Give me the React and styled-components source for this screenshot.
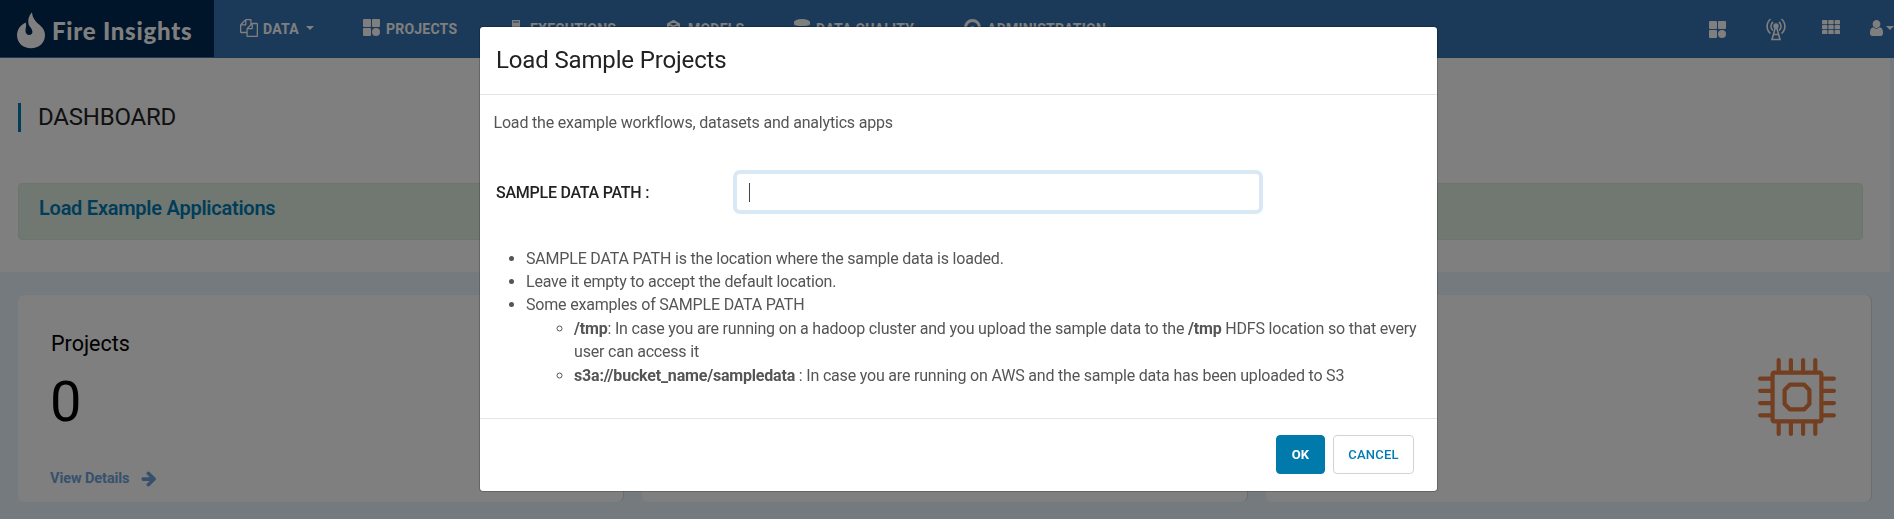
import React from "react";
import styled, { createGlobalStyle } from "styled-components";

const Global = createGlobalStyle`
  * { box-sizing: border-box; }
  html, body { margin: 0; height: 519px; overflow: hidden; background: #ebf5fd; }
  body { font-family: Roboto, "Liberation Sans", sans-serif; font-size: 16px; color: #555; }
  svg { display: block; flex: none; }
`;

const Page = styled.div`
  height: 519px;
  overflow: hidden;
`;

const NavBar = styled.header`
  display: flex;
  height: 58px;
  background: #3674b4;
  border-bottom: 1px solid #3472ae;
`;

const Brand = styled.div`
  display: flex;
  align-items: center;
  width: 214px;
  flex: none;
  padding: 4px 0 0 17px;
  gap: 7px;
  background: #002a54;
  color: #fff;
`;

const BrandName = styled.span`
  font-family: Lato, sans-serif;
  font-weight: 900;
  font-size: 24px;
  line-height: 30px;
  letter-spacing: 0.75px;
  white-space: nowrap;
`;

const Menu = styled.nav`
  display: flex;
  flex: 1;
  height: 57px;
`;

const MenuItem = styled.a`
  display: flex;
  align-items: center;
  flex: none;
  width: ${(p) => p.$width}px;
  padding: 0 0 2px 26px;
  color: #fff;
  font-size: 14px;
  font-weight: 700;
  letter-spacing: 0.22px;
  white-space: nowrap;
`;

const MenuIcon = styled.span`
  display: flex;
  justify-content: center;
  width: 17px;
  margin-right: 6px;
`;

const MenuText = styled.span`
  padding-top: 3px;
  line-height: 18px;
`;

const Caret = styled.span`
  width: 0;
  height: 0;
  border: 4.5px solid transparent;
  border-top: 4px solid #fff;
  border-bottom: 0;
  margin-left: ${(p) => p.$gap}px;
  flex: none;
`;

const Tools = styled.div`
  display: flex;
  width: 185px;
  flex: none;
  height: 57px;
  color: #fff;
`;

const Tool = styled.a`
  display: flex;
  flex: none;
  align-items: flex-start;
  width: ${(p) => p.$width}px;
  padding-top: ${(p) => p.$top}px;
`;

const ToolCaret = styled(Caret)`
  margin-top: 6px;
`;

const Intro = styled.section`
  width: 1890px;
  height: 214px;
  padding: 45px 0 0 18px;
  background: #fff;
`;

const Heading = styled.h1`
  margin: 0 0 51px;
  height: 29px;
  padding-left: 17px;
  border-left: 3px solid #007bb5;
  color: #222;
  font-size: 24px;
  font-weight: 400;
  line-height: 28px;
  letter-spacing: -0.2px;
`;

const Banner = styled.div`
  width: 1845px;
  height: 57px;
  padding: 11px 20px;
  border: 1px solid #d9ead9;
  border-radius: 4px;
  background: #e2f0e2;
  color: #007bb5;
  font-size: 20px;
  font-weight: 600;
  line-height: 26px;
  letter-spacing: -0.25px;
`;

const Cards = styled.section`
  display: grid;
  grid-template-columns: repeat(3, 605px);
  gap: 19px;
  padding: 23px 0 0 18px;
`;

const Card = styled.article`
  display: flex;
  justify-content: space-between;
  height: 207px;
  padding: 35px 35px 0 32px;
  border-radius: 6px;
  background: #fff;
  box-shadow: 1px 0 1px rgba(0, 0, 0, 0.12);
`;

const CardTitle = styled.h2`
  margin: 0 0 0 1px;
  color: #000;
  font-size: 21.5px;
  font-weight: 400;
  line-height: 28px;
`;

const Count = styled.div`
  margin: 14px 0 0;
  color: #000;
  font-size: 56px;
  line-height: 60px;
`;

const Details = styled.a`
  display: flex;
  align-items: center;
  gap: 12px;
  margin-top: 37px;
  color: #6ea2da;
  font-size: 14.5px;
  font-weight: 700;
  line-height: 20px;
  letter-spacing: -0.08px;
`;

const ChipHolder = styled.div`
  padding-top: 28px;
`;

const Overlay = styled.div`
  position: fixed;
  inset: 0;
  background: rgba(0, 0, 0, 0.5);
`;

const Dialog = styled.div`
  width: 959px;
  height: 466px;
  margin: 26px 0 0 479px;
  border: 1px solid rgba(0, 0, 0, 0.2);
  border-radius: 4px;
  background: #fff;
  background-clip: padding-box;
`;

const DialogHeader = styled.div`
  height: 68px;
  padding: 17px 16px;
  border-bottom: 1px solid #e5e5e5;
`;

const DialogTitle = styled.h3`
  margin: 0;
  color: #222;
  font-size: 24px;
  font-weight: 400;
  line-height: 32px;
  letter-spacing: -0.15px;
`;

const DialogBody = styled.div`
  height: 323px;
  padding: 16px 14px 0 14px;
  letter-spacing: -0.19px;
`;

const Lead = styled.p`
  margin: 0 0 36px -0.5px;
  line-height: 23px;
`;

const Field = styled.div`
  display: flex;
  align-items: center;
  height: 44px;
`;

const Label = styled.label`
  width: 243px;
  padding-left: 2px;
  color: #222;
  font-weight: 500;
  letter-spacing: -0.25px;
`;

const Input = styled.div`
  display: flex;
  align-items: center;
  width: 522px;
  height: 36px;
  padding-left: 12px;
  border-radius: 3px;
  background: #fff;
  box-shadow: 0 0 0 4px #d9e8f5;
`;

const TextCursor = styled.span`
  width: 1px;
  height: 19px;
  background: #444;
`;

const List = styled.ul`
  margin: ${(p) => p.$top}px 0 0;
  padding-left: ${(p) => p.$indent}px;
  list-style: ${(p) => p.$marker};
  line-height: ${(p) => p.$line}px;
`;

const DialogFooter = styled.div`
  display: flex;
  justify-content: flex-end;
  gap: 8px;
  height: 73px;
  padding: 16px 23px 0;
  border-top: 1px solid #e5e5e5;
`;

const Button = styled.button`
  width: ${(p) => (p.$primary ? 49 : 81)}px;
  height: 39px;
  padding: 0;
  border: 1px solid ${(p) => (p.$primary ? "#007aab" : "#ced4da")};
  border-radius: 4px;
  background: ${(p) => (p.$primary ? "#007aab" : "#fff")};
  color: ${(p) => (p.$primary ? "#fff" : "#007bb5")};
  font-family: inherit;
  font-size: 13px;
  font-weight: ${(p) => (p.$primary ? 700 : 500)};
  letter-spacing: 0.2px;
`;

const Flame = () => (
  <svg width="28" height="37" viewBox="0 0 28 37" fill="currentColor">
    <path d="M15 .3C12 3.500 10.800 7.500 11.400 11.200c.5 3.200 3.700 5 4 8.300.2 2.200-1.200 3.500-3.200 3.500-2.400 0-3.700-1.700-3.700-4.200 0-2.800 1.200-4.600.3-8.300C3.600 12.800 0 17.500 0 23.300 0 31 6.200 36.300 14 36.300s14-5.300 14-13c0-4.300-2-7.400-5.300-10.200C18.600 9.700 15.400 6 15 .3z" />
  </svg>
);

const Copy = () => (
  <svg width="18" height="18" viewBox="0 0 1792 1792" fill="currentColor">
    <path d="M1696 384q40 0 68 28t28 68v1216q0 40-28 68t-68 28h-960q-40 0-68-28t-28-68v-288h-544q-40 0-68-28t-28-68v-672q0-40 20-88t48-76l408-408q28-28 76-48t88-20h416q40 0 68 28t28 68v328q68-40 128-40h416zm-544 213l-299 299h299v-299zm-640-384l-299 299h299v-299zm196 647l316-316v-416h-384v416q0 40-28 68t-68 28h-416v640h512v-256q0-40 20-88t48-76zm956 804v-1152h-384v416q0 40-28 68t-68 28h-416v640h896z" />
  </svg>
);

const Tiles = () => (
  <svg width="17" height="18" viewBox="0 0 17 18" fill="currentColor">
    <rect width="8" height="8" rx="1" />
    <rect x="9" width="8" height="8" rx="1" />
    <rect y="9" width="8" height="8" rx="1" />
    <circle cx="13" cy="13" r="4" />
  </svg>
);

const Battery = () => (
  <svg width="8" height="16" viewBox="0 0 8 16" fill="currentColor">
    <path d="M0 0h8v1.400H0zM0 1h1v2H0zM7 1h1v2H7zM0 2.600h8V16H0z" />
  </svg>
);

const Cube = () => (
  <svg width="13" height="16" viewBox="0 0 13 16" fill="none" stroke="currentColor" strokeWidth="2">
    <path d="M1 4.200 6.500 1 12 4.200v7.600L6.500 15 1 11.800zM1 4.200l5.500 2.500L12 4.200M6.500 7v8" />
  </svg>
);

const Database = () => (
  <svg width="16" height="17" viewBox="0 0 16 17" fill="currentColor">
    <ellipse cx="8" cy="3" rx="8" ry="3" />
    <path d="M0 3h16v2.500c-3 2-13 2-16 0zM0 7.500c3 2 13 2 16 0v3c-3 2-13 2-16 0zM0 12.500c3 2 13 2 16 0V15c-3 2-13 2-16 0z" />
  </svg>
);

const AdminBadge = () => (
  <svg width="17" height="17" viewBox="0 0 17 17">
    <circle cx="8.500" cy="8.500" r="7" fill="none" stroke="currentColor" strokeWidth="3" />
    <circle cx="8.500" cy="9.500" r="2.500" fill="currentColor" />
  </svg>
);

const Tower = () => (
  <svg width="22" height="23" viewBox="0 0 22 23" fill="none" stroke="currentColor" strokeWidth="1.600">
    <path d="M5.500 1a9.500 9.500 0 0 0 0 14.500M16.500 1a9.500 9.500 0 0 1 0 14.500M8 4a5.200 5.200 0 0 0 0 8.300M14 4a5.200 5.200 0 0 1 0 8.300" />
    <circle cx="11" cy="8" r="2.700" fill="currentColor" stroke="none" />
    <path d="M10.500 9 7 21.500h8L11.500 9zM9 16.500h4" />
  </svg>
);

const GridDots = () => (
  <svg width="18" height="14" viewBox="0 0 18 14" fill="currentColor">
    {[0, 5, 10].map((y) =>
      [0, 6.3, 12.6].map((x) => <rect key={`${x}-${y}`} x={x} y={y} width="5.400" height="4.200" rx=".8" />)
    )}
  </svg>
);

const User = () => (
  <svg width="13" height="16" viewBox="256 128 1280 1536" preserveAspectRatio="none" fill="currentColor">
    <path d="M1536 1399q0 109-62.500 187t-150.500 78h-854q-88 0-150.500-78t-62.500-187q0-85 8.500-160.500t31.500-152 58.500-131 94-89 134.500-34.500q131 128 313 128t313-128q76 0 134.500 34.500t94 89 58.500 131 31.500 152 8.500 160.500zm-256-887q0 159-112.500 271.500t-271.500 112.500-271.500-112.500-112.500-271.500 112.500-271.500 271.500-112.500 271.500 112.500 112.500 271.500z" />
  </svg>
);

const ArrowRight = () => (
  <svg width="15" height="16" viewBox="64 150 1536 1620" fill="currentColor">
    <path d="M1600 960q0 54-37 91l-651 651q-39 37-91 37-51 0-90-37l-75-75q-38-38-38-91t38-91l293-293h-704q-52 0-84.500-37.500t-32.500-90.500v-128q0-53 32.500-90.500t84.500-37.500h704l-293-294q-38-36-38-90t38-90l75-75q38-38 90-38 53 0 91 38l651 651q37 35 37 90z" />
  </svg>
);

const PINS = [20.7, 32.9, 45.1, 57.3];

const Chip = () => (
  <svg width="78" height="78" viewBox="0 0 78 78" fill="none" stroke="#e87e40" strokeWidth="4.200" strokeLinecap="round">
    <rect x="14.600" y="14.600" width="48.800" height="48.800" rx="2" />
    <path d="M32 26.600h14l5.400 5.400v14L46 51.400H32L26.600 46V32z" strokeLinejoin="round" />
    {PINS.map((p) => (
      <path key={p} d={`M${p} 2.100V13M${p} 65V75.900M2.100 ${p}H13M65 ${p}H75.900`} />
    ))}
  </svg>
);

const MENU = [
  { text: "DATA", Icon: Copy, width: 123, caret: true },
  { text: "PROJECTS", Icon: Tiles, width: 144 },
  { text: "EXECUTIONS", Icon: Battery, width: 158 },
  { text: "MODELS", Icon: Cube, width: 128 },
  { text: "DATA QUALITY", Icon: Database, width: 171 },
  { text: "ADMINISTRATION", Icon: AdminBadge, width: 170 },
];

export default function App() {
  return (
    <>
      <Global />
      <Page>
        <NavBar>
          <Brand>
            <Flame />
            <BrandName>Fire Insights</BrandName>
          </Brand>
          <Menu>
            {MENU.map(({ text, Icon, width, caret }) => (
              <MenuItem key={text} $width={width}>
                <MenuIcon><Icon /></MenuIcon>
                <MenuText>{text}</MenuText>
                {caret && <Caret $gap={7} />}
              </MenuItem>
            ))}
          </Menu>
          <Tools>
            <Tool $width={56} $top={21}><Tiles /></Tool>
            <Tool $width={57} $top={18}><Tower /></Tool>
            <Tool $width={48} $top={20}><GridDots /></Tool>
            <Tool $width={24} $top={20}><User /><ToolCaret $gap={3} /></Tool>
          </Tools>
        </NavBar>
        <Intro>
          <Heading>DASHBOARD</Heading>
          <Banner>Load Example Applications</Banner>
        </Intro>
        <Cards>
          <Card>
            <div>
              <CardTitle>Projects</CardTitle>
              <Count>0</Count>
              <Details>View Details <ArrowRight /></Details>
            </div>
          </Card>
          <Card />
          <Card>
            <div />
            <ChipHolder><Chip /></ChipHolder>
          </Card>
        </Cards>
      </Page>
      <Overlay>
        <Dialog role="dialog">
          <DialogHeader>
            <DialogTitle>Load Sample Projects</DialogTitle>
          </DialogHeader>
          <DialogBody>
            <Lead>Load the example workflows, datasets and analytics apps</Lead>
            <Field>
              <Label>SAMPLE DATA PATH :</Label>
              <Input><TextCursor /></Input>
            </Field>
            <List $top={33} $indent={32} $marker="disc" $line={23}>
              <li>SAMPLE DATA PATH is the location where the sample data is loaded.</li>
              <li>Leave it empty to accept the default location.</li>
              <li>
                Some examples of SAMPLE DATA PATH
                <List $top={0.5} $indent={48} $marker="circle" $line={23.5}>
                  <li>
                    <b>/tmp</b>: In case you are running on a hadoop cluster and you upload the sample data to the{" "}
                    <b>/tmp</b> HDFS location so that every user can access it
                  </li>
                  <li>
                    <b>s3a://bucket_name/sampledata</b> : In case you are running on AWS and the sample data has been
                    uploaded to S3
                  </li>
                </List>
              </li>
            </List>
          </DialogBody>
          <DialogFooter>
            <Button $primary>OK</Button>
            <Button>CANCEL</Button>
          </DialogFooter>
        </Dialog>
      </Overlay>
    </>
  );
}
